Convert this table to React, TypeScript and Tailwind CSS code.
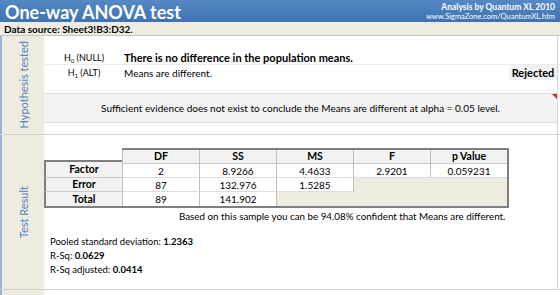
export default function App() {
  const cols = ['DF', 'SS', 'MS', 'F', 'p Value'];
  const rows: { name: string; vals: (string | null)[] }[] = [
    { name: 'Factor', vals: ['2', '8.9266', '4.4633', '2.9201', '0.059231'] },
    { name: 'Error', vals: ['87', '132.976', '1.5285', null, null] },
    { name: 'Total', vals: ['89', '141.902', null, null, null] },
  ];

  return (
    <div className="w-[560px] h-[295px] overflow-hidden bg-white font-['Lato',sans-serif] text-[10px] text-black leading-none">
      {/* title bar */}
      <div className="h-[22px] flex items-center justify-between pl-[5px] pr-[5px] bg-gradient-to-b from-[#5688c4] to-[#3f72b1]">
        <div className="text-white font-bold text-[18px] pt-[1px]">One-way ANOVA test</div>
        <div className="flex flex-col items-end text-white gap-[2px] pt-[1px]">
          <div className="font-bold text-[8.5px]">Analysis by Quantum XL 2010</div>
          <div className="text-[7.5px]">www.SigmaZone.com/QuantumXL.htm</div>
        </div>
      </div>

      {/* data source */}
      <div className="h-[14px] flex items-center pl-[4px] bg-[#eeece1] border-b border-[#c4c4c4] text-[10px] font-bold">
        Data source: Sheet3!B3:D32.
      </div>

      {/* hypothesis section */}
      <div className="flex h-[99px] border-b border-[#d4d4d4]">
        <div className="w-[44px] shrink-0 bg-[#eeece1] border-l-2 border-[#9bb3d0] flex items-center justify-center">
          <span className="[writing-mode:vertical-rl] rotate-180 text-[#4f84c0] text-[11px]">Hypothesis tested</span>
        </div>
        <div className="flex-1 flex flex-col border-r border-[#d4d4d4] mr-[2px]">
          <div className="h-[15px]" />
          <div className="flex h-[14px] items-center border-b border-[#ececec]">
            <div className="w-[80px] text-center text-[9px]">
              H<sub className="text-[6px]">0</sub> (NULL)
            </div>
            <div className="font-bold text-[11px]">There is no difference in the population means.</div>
          </div>
          <div className="flex h-[15px] items-center">
            <div className="w-[80px] text-center text-[9px]">
              H<sub className="text-[6px]">1</sub> (ALT)
            </div>
            <div className="flex-1 text-[10px]">Means are different.</div>
            <div className="w-[48px] h-[15px] flex items-center justify-center bg-[#f2f2f2] font-bold text-[11px]">Rejected</div>
          </div>
          <div className="h-[13px]" />
          <div className="relative h-[30px] bg-[#f2f2f2] border-y border-[#dcdcdc] flex items-center justify-center text-[10px]">
            Sufficient evidence does not exist to conclude the Means are different at alpha = 0.05 level.
            <div className="absolute right-0 top-0 w-0 h-0 border-t-[5px] border-l-[5px] border-t-[#e02020] border-l-transparent" />
          </div>
        </div>
      </div>

      {/* test result section */}
      <div className="flex h-[155px] border-b border-[#cfcfcf]">
        <div className="w-[44px] shrink-0 bg-[#eeece1] border-l-2 border-[#9bb3d0] flex items-center justify-center">
          <span className="[writing-mode:vertical-rl] rotate-180 text-[#4f84c0] text-[11px]">Test Result</span>
        </div>
        <div className="flex-1 flex flex-col border-r border-[#d4d4d4] mr-[2px]">
          <div className="h-[13px]" />
          <div className="w-[465px]">
            <div className="grid grid-cols-[78px_77px_77px_77px_77px_1fr] border-2 border-[#7f7f7f] border-l-0">
              <div className="h-[14px] bg-white border-b-2 border-b-[#7f7f7f] -mt-[2px] border-t-2 border-t-white" />
              {cols.map((c) => (
                <div key={c} className="h-[14px] flex items-center justify-center bg-[#f2f2f2] font-bold text-[10.5px] border-l border-[#bfbfbf] border-b border-b-[#c8c8c8]">
                  {c}
                </div>
              ))}
              {rows.map((r, i) => (
                <>
                  <div key={r.name} className={`h-[14px] flex items-center justify-center bg-[#f2f2f2] font-bold text-[10.5px] border-l-2 border-l-[#7f7f7f] ${i < 2 ? 'border-b border-b-[#c8c8c8]' : ''} ${i === 0 ? '-mt-[2px] h-[16px]' : ''}`}>
                    {r.name}
                  </div>
                  {r.vals.map((v, j) =>
                    v === null ? (
                      <div key={j} className={`h-[14px] bg-[#eeece1] ${j > 0 && r.vals[j - 1] !== null ? 'border-l border-[#bfbfbf]' : ''}`} />
                    ) : (
                      <div key={j} className={`h-[14px] flex items-center justify-center bg-white border-l border-[#bfbfbf] ${i < 2 ? 'border-b border-b-[#dcdcdc]' : ''}`}>
                        {v}
                      </div>
                    )
                  )}
                </>
              ))}
            </div>
          </div>
          <div className="pl-[135px] mt-[4px] text-[9.8px]">Based on this sample you can be 94.08% confident that Means are different.</div>
          <div className="pl-[6px] mt-[15px] flex flex-col gap-[4.5px] text-[9.5px]">
            <div>
              Pooled standard deviation: <span className="font-bold">1.2363</span>
            </div>
            <div>
              R-Sq: <span className="font-bold">0.0629</span>
            </div>
            <div>
              R-Sq adjusted: <span className="font-bold">0.0414</span>
            </div>
          </div>
        </div>
      </div>
      <div className="flex h-[6px]">
        <div className="w-[44px] bg-[#eeece1] border-l-2 border-[#9bb3d0]" />
      </div>
    </div>
  );
}
